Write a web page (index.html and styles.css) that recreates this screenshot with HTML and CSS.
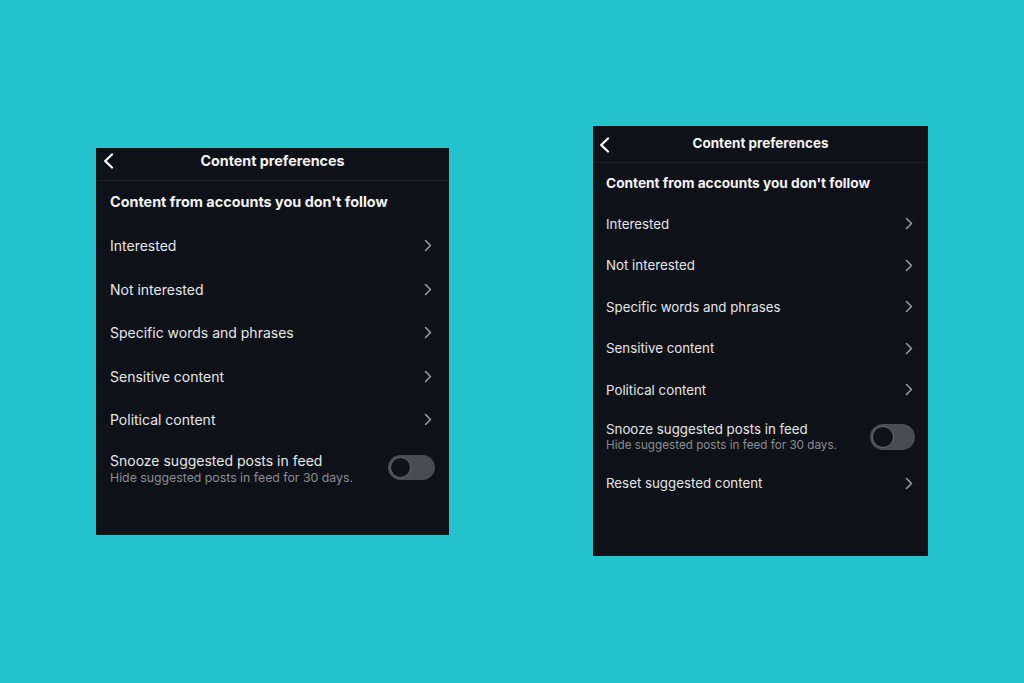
FILE: index.html
```html
<!DOCTYPE html>
<html lang="en">
<head>
<meta charset="utf-8">
<title>Content preferences</title>
<link rel="stylesheet" href="styles.css">
</head>
<body>
<main class="stage">
  <section class="panel panel--a">
    <header class="header">
      <span class="back"><svg width="11" height="16" viewBox="0 0 11 16"><path d="M9 1.5 L2.2 8 L9 14.5" fill="none" stroke="#fff" stroke-width="2.2" stroke-linecap="round" stroke-linejoin="round"/></svg></span>
      <h1 class="title">Content preferences</h1>
      <span></span>
    </header>
    <h2 class="section-title">Content from accounts you don't follow</h2>
    <ul class="list">
      <li class="row"><span>Interested</span><svg class="chev" width="8" height="13" viewBox="0 0 8 13"><path d="M1.5 1.5 L6.5 6.5 L1.5 11.5" fill="none" stroke="#9a9da3" stroke-width="1.5" stroke-linecap="round" stroke-linejoin="round"/></svg></li>
      <li class="row"><span>Not interested</span><svg class="chev" width="8" height="13" viewBox="0 0 8 13"><path d="M1.5 1.5 L6.5 6.5 L1.5 11.5" fill="none" stroke="#9a9da3" stroke-width="1.5" stroke-linecap="round" stroke-linejoin="round"/></svg></li>
      <li class="row"><span>Specific words and phrases</span><svg class="chev" width="8" height="13" viewBox="0 0 8 13"><path d="M1.5 1.5 L6.5 6.5 L1.5 11.5" fill="none" stroke="#9a9da3" stroke-width="1.5" stroke-linecap="round" stroke-linejoin="round"/></svg></li>
      <li class="row"><span>Sensitive content</span><svg class="chev" width="8" height="13" viewBox="0 0 8 13"><path d="M1.5 1.5 L6.5 6.5 L1.5 11.5" fill="none" stroke="#9a9da3" stroke-width="1.5" stroke-linecap="round" stroke-linejoin="round"/></svg></li>
      <li class="row"><span>Political content</span><svg class="chev" width="8" height="13" viewBox="0 0 8 13"><path d="M1.5 1.5 L6.5 6.5 L1.5 11.5" fill="none" stroke="#9a9da3" stroke-width="1.5" stroke-linecap="round" stroke-linejoin="round"/></svg></li>
      <li class="row row--toggle">
        <div class="texts">
          <span class="main">Snooze suggested posts in feed</span>
          <span class="sub">Hide suggested posts in feed for 30 days.</span>
        </div>
        <span class="toggle"><span class="knob"></span></span>
      </li>
    </ul>
  </section>

  <section class="panel panel--b">
    <header class="header">
      <span class="back"><svg width="11" height="16" viewBox="0 0 11 16"><path d="M9 1.5 L2.2 8 L9 14.5" fill="none" stroke="#fff" stroke-width="2.2" stroke-linecap="round" stroke-linejoin="round"/></svg></span>
      <h1 class="title">Content preferences</h1>
      <span></span>
    </header>
    <h2 class="section-title">Content from accounts you don't follow</h2>
    <ul class="list">
      <li class="row"><span>Interested</span><svg class="chev" width="8" height="13" viewBox="0 0 8 13"><path d="M1.5 1.5 L6.5 6.5 L1.5 11.5" fill="none" stroke="#9a9da3" stroke-width="1.5" stroke-linecap="round" stroke-linejoin="round"/></svg></li>
      <li class="row"><span>Not interested</span><svg class="chev" width="8" height="13" viewBox="0 0 8 13"><path d="M1.5 1.5 L6.5 6.5 L1.5 11.5" fill="none" stroke="#9a9da3" stroke-width="1.5" stroke-linecap="round" stroke-linejoin="round"/></svg></li>
      <li class="row"><span>Specific words and phrases</span><svg class="chev" width="8" height="13" viewBox="0 0 8 13"><path d="M1.5 1.5 L6.5 6.5 L1.5 11.5" fill="none" stroke="#9a9da3" stroke-width="1.5" stroke-linecap="round" stroke-linejoin="round"/></svg></li>
      <li class="row"><span>Sensitive content</span><svg class="chev" width="8" height="13" viewBox="0 0 8 13"><path d="M1.5 1.5 L6.5 6.5 L1.5 11.5" fill="none" stroke="#9a9da3" stroke-width="1.5" stroke-linecap="round" stroke-linejoin="round"/></svg></li>
      <li class="row"><span>Political content</span><svg class="chev" width="8" height="13" viewBox="0 0 8 13"><path d="M1.5 1.5 L6.5 6.5 L1.5 11.5" fill="none" stroke="#9a9da3" stroke-width="1.5" stroke-linecap="round" stroke-linejoin="round"/></svg></li>
      <li class="row row--toggle">
        <div class="texts">
          <span class="main">Snooze suggested posts in feed</span>
          <span class="sub">Hide suggested posts in feed for 30 days.</span>
        </div>
        <span class="toggle"><span class="knob"></span></span>
      </li>
      <li class="row"><span>Reset suggested content</span><svg class="chev" width="8" height="13" viewBox="0 0 8 13"><path d="M1.5 1.5 L6.5 6.5 L1.5 11.5" fill="none" stroke="#9a9da3" stroke-width="1.5" stroke-linecap="round" stroke-linejoin="round"/></svg></li>
    </ul>
  </section>
</main>
</body>
</html>
```
FILE: styles.css
```css
html, body {
  margin: 0;
  padding: 0;
  background: #22c3cc;
  height: 100%;
  overflow: hidden;
}

.stage {
  display: flex;
  align-items: flex-start;
  gap: 144px;
  padding-left: 96px;
}

.panel {
  background: #0e1117;
  color: #e6e7e9;
  font-family: "Inter", "Liberation Sans", sans-serif;
  box-sizing: border-box;
}

.panel--a {
  width: 353px;
  height: 387px;
  margin-top: 148px;
  font-size: 14px;
}

.panel--b {
  width: 335px;
  height: 430px;
  margin-top: 126px;
  font-size: 13.3px;
}

.header {
  display: grid;
  grid-template-columns: 1fr auto 1fr;
  align-items: center;
  height: 26px;
  border-bottom: 1px solid #1c1f26;
}

.panel--a .header { padding: 0 0 6px; }
.panel--b .header { padding: 4px 0 6px; }

.back {
  display: flex;
  justify-self: start;
  padding-left: 7px;
}
.panel--b .back { padding-left: 6px; margin-top: 3px; }

.title {
  margin: 0;
  font-weight: 700;
  color: #f4f4f5;
  line-height: 26px;
}
.panel--a .title { font-size: 14.3px; }
.panel--b .title { font-size: 13.5px; }

.section-title {
  margin: 0;
  font-weight: 700;
  color: #f4f4f5;
  line-height: 20px;
}
.panel--a .section-title { padding: 11px 14px 12px; font-size: 14.4px; }
.panel--b .section-title { padding: 10px 13px 10px; font-size: 13.7px; }

.list {
  list-style: none;
  margin: 0;
  padding: 0;
}

.row {
  display: flex;
  align-items: center;
  justify-content: space-between;
}
.panel--a .row { height: 43.5px; padding: 0 17px 0 14px; }
.panel--b .row { height: 41.5px; padding: 0 15px 0 13px; }

.panel--a .row--toggle { height: auto; padding: 10px 14px; }
.panel--b .row--toggle { height: auto; padding: 10px 13px 10px; }

.texts {
  display: flex;
  flex-direction: column;
}
.main { line-height: 18px; }
.sub {
  color: #8b8e94;
  line-height: 16px;
}
.panel--a .sub { font-size: 12.3px; }
.panel--b .sub { font-size: 11.7px; line-height: 15px; }
.panel--b .main { line-height: 17px; }

.chev { display: block; }

.toggle {
  display: flex;
  align-items: center;
  background: #4a4c52;
  border-radius: 13px;
  box-sizing: border-box;
  padding: 0 2px;
}
.panel--a .toggle { width: 47px; height: 25px; margin-top: -2px; }
.panel--b .toggle { width: 45px; height: 26px; }

.knob {
  width: 21px;
  height: 21px;
  border-radius: 50%;
  background: #111318;
  box-sizing: border-box;
  border: 1.5px solid #66686e;
}
.panel--b .knob { width: 22px; height: 22px; }
```
